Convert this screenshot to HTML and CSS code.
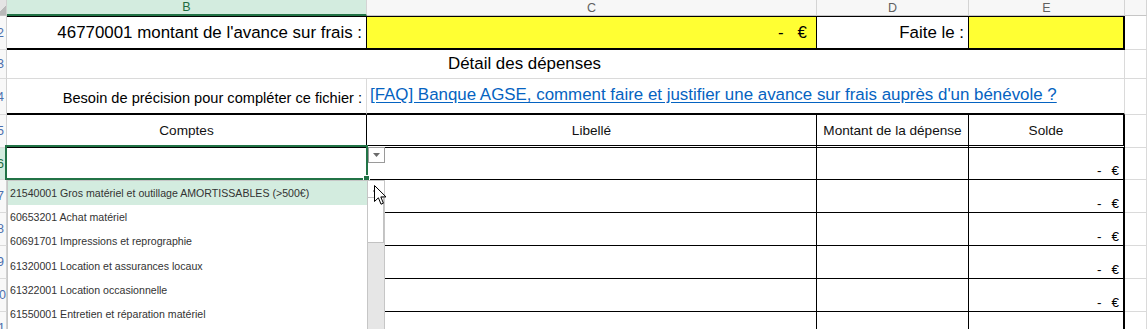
FILE: index.html
```html
<!DOCTYPE html>
<html lang="fr">
<head>
  <meta charset="UTF-8">
  <title>Avance sur frais</title>
  <link rel="stylesheet" href="styles.css">
</head>
<body>
  <div class="sheet">
    <div class="corner"></div>
    <div class="colhead sel">B</div>
    <div class="colhead">C</div>
    <div class="colhead">D</div>
    <div class="colhead">E</div>
    <div class="colhead"></div>

    <!-- row 2 -->
    <div class="rowhead"><span>2</span></div>
    <div class="cell big top thick-b k-r end">46770001 montant de l'avance sur frais :</div>
    <div class="cell big top thick-b k-r yellow money"><span>-</span><span>€</span></div>
    <div class="cell big top thick-b k-r end">Faite le :</div>
    <div class="cell big top thick-b thick-r yellow"></div>
    <div class="cell"></div>

    <!-- row 3 -->
    <div class="rowhead"><span>3</span></div>
    <div class="cell big span4 title">Détail des dépenses</div>
    <div class="cell"></div>

    <!-- row 4 -->
    <div class="rowhead"><span>4</span></div>
    <div class="cell thick-b end bottom help">Besoin de précision pour compléter ce fichier :</div>
    <div class="cell big thick-b span3 bottom link-cell"><a href="#">[FAQ] Banque AGSE, comment faire et justifier une avance sur frais auprès d'un bénévole ?</a></div>
    <div class="cell"></div>

    <!-- row 5 -->
    <div class="rowhead"><span>5</span></div>
    <div class="cell head dbl-b k-r">Comptes</div>
    <div class="cell head dbl-b k-r">Libellé</div>
    <div class="cell head dbl-b k-r">Montant de la dépense</div>
    <div class="cell head dbl-b thick-r">Solde</div>
    <div class="cell"></div>

    <!-- rows 6-11 -->
    <div class="rowhead sel"><span>6</span></div>
    <div class="cell k-r k-b"></div>
    <div class="cell k-r k-b"></div>
    <div class="cell k-r k-b"></div>
    <div class="cell thick-r k-b solde"><span>-</span><span>€</span></div>
    <div class="cell"></div>

    <div class="rowhead"><span>7</span></div>
    <div class="cell k-r k-b"></div>
    <div class="cell k-r k-b"></div>
    <div class="cell k-r k-b"></div>
    <div class="cell thick-r k-b solde"><span>-</span><span>€</span></div>
    <div class="cell"></div>

    <div class="rowhead"><span>8</span></div>
    <div class="cell k-r k-b"></div>
    <div class="cell k-r k-b"></div>
    <div class="cell k-r k-b"></div>
    <div class="cell thick-r k-b solde"><span>-</span><span>€</span></div>
    <div class="cell"></div>

    <div class="rowhead"><span>9</span></div>
    <div class="cell k-r k-b"></div>
    <div class="cell k-r k-b"></div>
    <div class="cell k-r k-b"></div>
    <div class="cell thick-r k-b solde"><span>-</span><span>€</span></div>
    <div class="cell"></div>

    <div class="rowhead"><span>10</span></div>
    <div class="cell k-r k-b"></div>
    <div class="cell k-r k-b"></div>
    <div class="cell k-r k-b"></div>
    <div class="cell thick-r k-b solde"><span>-</span><span>€</span></div>
    <div class="cell"></div>

    <div class="rowhead"><span>11</span></div>
    <div class="cell k-r k-b"></div>
    <div class="cell k-r k-b"></div>
    <div class="cell k-r k-b"></div>
    <div class="cell thick-r k-b"></div>
    <div class="cell"></div>

    <!-- active cell + validation list -->
    <div class="selection"><i class="handle"></i></div>
    <div class="dd-btn">
      <svg width="7" height="4" viewBox="0 0 7 4"><path d="M0 0h7L3.5 4z" fill="#6b6b6b"/></svg>
    </div>
    <div class="dropdown">
      <ul class="options">
        <li class="hover">21540001 Gros matériel et outillage AMORTISSABLES (&gt;500€)</li>
        <li>60653201 Achat matériel</li>
        <li>60691701 Impressions et reprographie</li>
        <li>61320001 Location et assurances locaux</li>
        <li>61322001 Location occasionnelle</li>
        <li>61550001 Entretien et réparation matériel</li>
        <li>61560001 Maintenance</li>
      </ul>
      <div class="scrollbar">
        <div class="sb-up">
          <svg width="7" height="5" viewBox="0 0 7 5"><path d="M0.5 4.5L3.5 1.2L6.5 4.5" fill="none" stroke="#444" stroke-width="1.2"/></svg>
        </div>
        <div class="sb-thumb"></div>
        <div class="sb-track"></div>
      </div>
    </div>
    <svg class="cursor" width="13" height="21" viewBox="0 0 13 21">
      <path d="M0.5 0.5V16.5L4.4 12.8L7 19.2L9.4 18.2L6.8 11.9H12Z" fill="#fff" stroke="#000" stroke-width="1"/>
    </svg>
  </div>
</body>
</html>
```

FILE: styles.css
```css
body {
  margin: 0;
  background: #fff;
  font-family: "Liberation Sans", Arial, sans-serif;
  color: #000;
  overflow: hidden;
}
.sheet {
  position: relative;
  display: grid;
  grid-template-columns: 7px 360px 450px 152px 156px 1fr;
  grid-template-rows: 16px 34px 29px 36px 33px 32px repeat(5, 33px);
  width: 1147px;
  height: 329px;
  overflow: hidden;
}

/* headers */
.corner {
  background: linear-gradient(135deg, #e4e4e4 55%, #b9b9b9 55%);
  border-right: 1px solid #d0d0d0;
  border-bottom: 1px solid #c6c6c6;
}
.colhead {
  box-sizing: border-box;
  display: flex;
  align-items: center;
  justify-content: center;
  background: #f7f7f7;
  color: #5f5f5f;
  font-size: 12.5px;
  border-right: 1px solid #d4d4d4;
  border-bottom: 1px solid #c6c6c6;
}
.colhead.sel {
  background: #d3ecdf;
  color: #1e6b40;
  border-bottom: 2px solid #217346;
}
.rowhead {
  box-sizing: border-box;
  overflow: hidden;
  display: flex;
  align-items: center;
  background: #f8f8f8;
  color: #4b6fae;
  font-size: 12.5px;
  border-right: 1px solid #d0d0d0;
  border-bottom: 1px solid #dadada;
}
.rowhead span {
  display: block;
  flex: none;
  width: 12px;
  margin-left: -8px;
  text-align: right;
}
.rowhead.sel {
  background: #d3ecdf;
  color: #1e6b40;
  border-right: 2px solid #217346;
}

/* cells */
.cell {
  box-sizing: border-box;
  display: flex;
  align-items: center;
  min-width: 0;
  white-space: nowrap;
  overflow: hidden;
  border-right: 1px solid #dadada;
  border-bottom: 1px solid #dadada;
}
.big { font-size: 16.9px; }
.top { border-top: 1px solid #000; }
.k-r { border-right-color: #000; }
.k-b { border-bottom-color: #000; }
.thick-r { border-right: 2px solid #000; }
.thick-b { border-bottom: 2px solid #000; }
.dbl-b { border-bottom: 3px double #000; }
.end { justify-content: flex-end; padding-right: 4px; }
.bottom { align-items: flex-end; }
.span3 { grid-column: span 3; }
.span4 { grid-column: span 4; }
.yellow { background: #ffff33; }

.money {
  justify-content: flex-end;
  gap: 14px;
  padding-right: 9px;
}
.title {
  justify-content: center;
  padding-right: 82px;
}
.help {
  font-size: 14.6px;
  padding-bottom: 7px;
}
.link-cell {
  padding: 0 0 8px 3px;
}
.link-cell a {
  color: #0563c1;
  text-decoration: underline;
  text-underline-offset: 2px;
}
.head {
  justify-content: center;
  font-size: 13.6px;
  color: #111;
}
.solde {
  align-items: flex-end;
  justify-content: flex-end;
  gap: 10px;
  padding: 0 4px 1px 0;
  font-size: 13.5px;
}

/* active cell */
.selection {
  position: absolute;
  left: 5px;
  top: 145px;
  width: 363px;
  height: 35px;
  box-sizing: border-box;
  border: 2px solid #217346;
}
.handle {
  position: absolute;
  right: -4px;
  bottom: -4px;
  width: 5px;
  height: 5px;
  background: #217346;
  border: 1px solid #fff;
}
.dd-btn {
  position: absolute;
  left: 368px;
  top: 147px;
  width: 17px;
  height: 16px;
  box-sizing: border-box;
  border: 1px solid #9a9a9a;
  background: #fff;
  display: flex;
  align-items: center;
  justify-content: center;
}

/* validation list */
.dropdown {
  position: absolute;
  left: 7px;
  top: 180px;
  width: 378px;
  height: 160px;
  box-sizing: border-box;
  border: 1px solid #c6c6c6;
  background: #fff;
  display: flex;
}
.options {
  flex: 1;
  margin: 0;
  padding: 0;
  list-style: none;
  font-size: 10.6px;
  color: #333;
}
.options li {
  height: 24.2px;
  line-height: 24px;
  padding-left: 2px;
  white-space: nowrap;
}
.options li.hover {
  background: #d3ecdf;
}
.scrollbar {
  width: 16px;
  display: flex;
  flex-direction: column;
  border-left: 1px solid #c6c6c6;
}
.sb-up {
  height: 16px;
  display: flex;
  align-items: center;
  justify-content: center;
  background: #fff;
}
.sb-thumb {
  height: 46px;
  box-sizing: border-box;
  border: 1px solid #c2c2c2;
  border-left: 0;
  background: #fff;
}
.sb-track {
  flex: 1;
  background: #e6e6e6;
}
.cursor {
  position: absolute;
  left: 374px;
  top: 185px;
}
```
